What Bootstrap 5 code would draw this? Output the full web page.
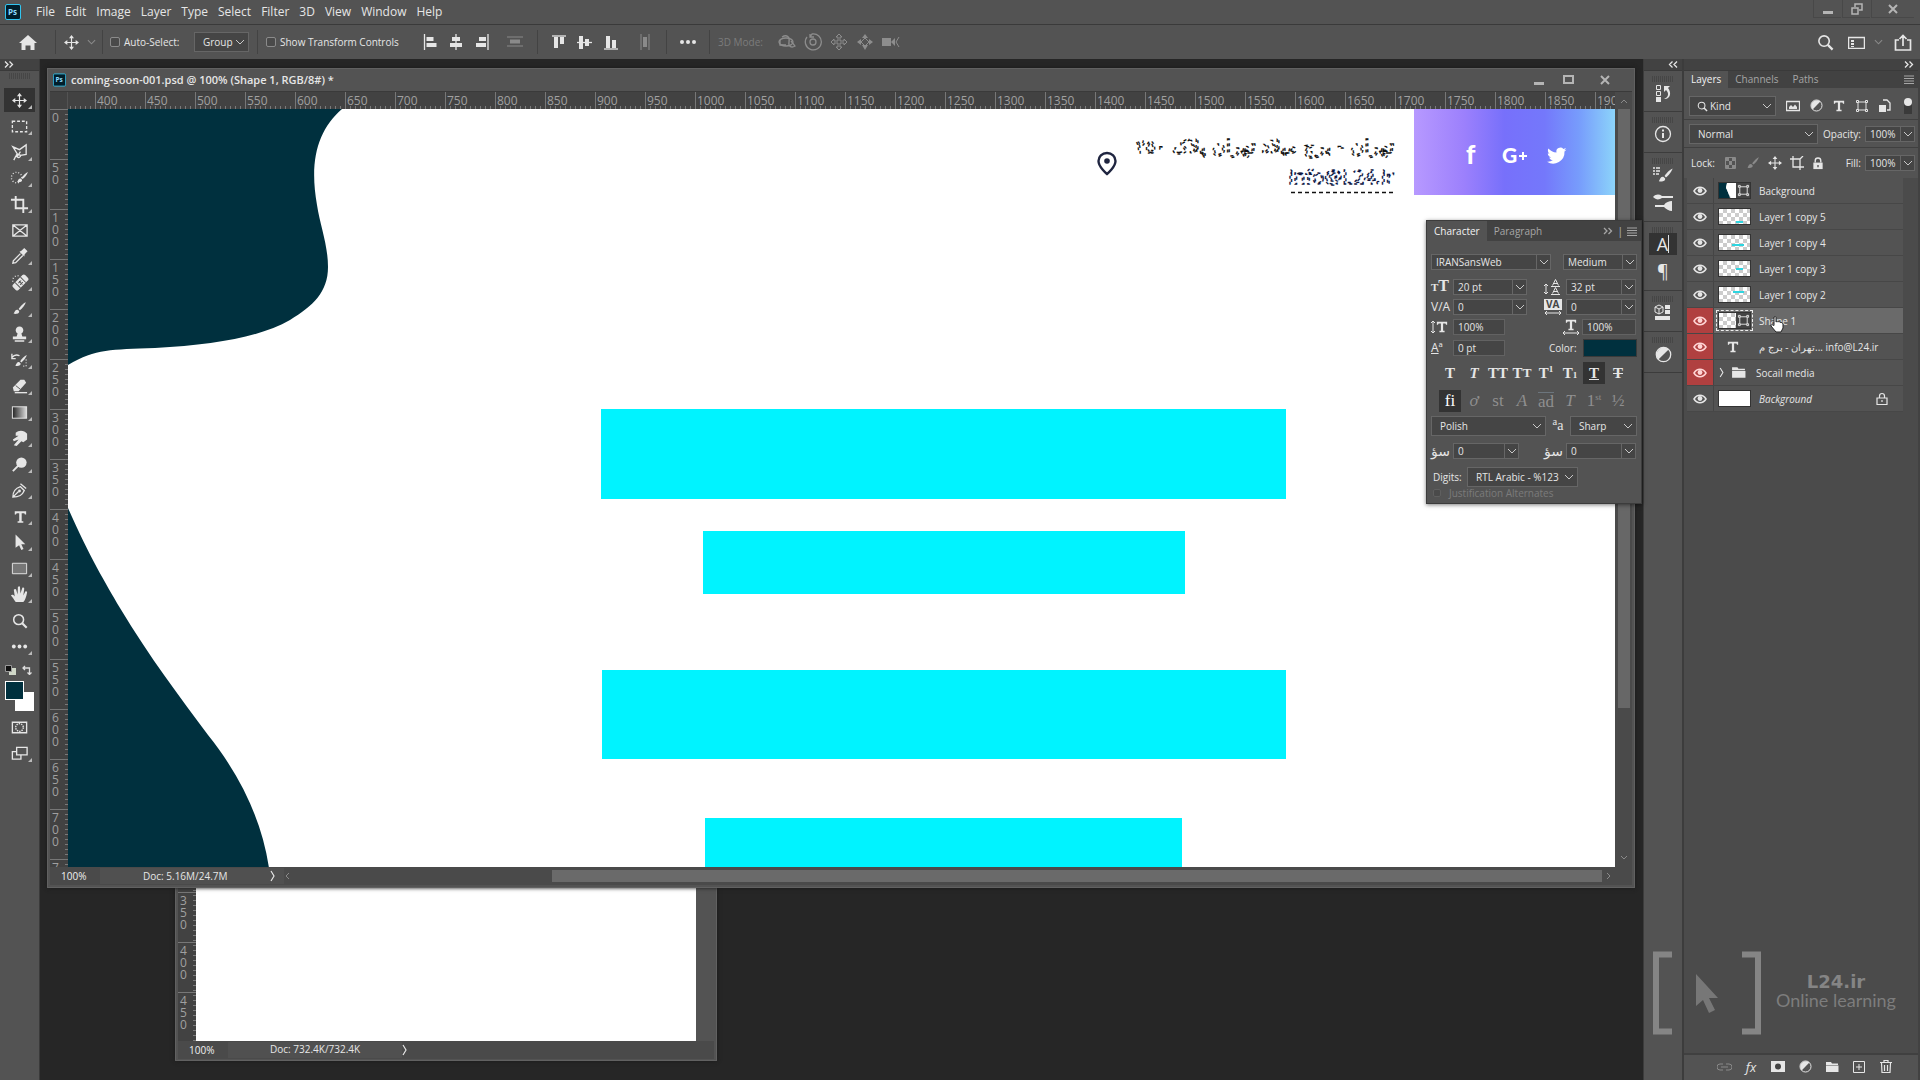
<!DOCTYPE html>
<html lang="en">
<head>
<meta charset="utf-8">
<meta name="viewport" content="width=device-width, initial-scale=1">
<title>coming-soon-001.psd</title>
<link href="https://cdn.jsdelivr.net/npm/bootstrap@5.3.0/dist/css/bootstrap.min.css" rel="stylesheet">
<style>
:root{--bar:#535353;--edge:#3a3a3a;--well:#454545;--deep:#424242;--ink:#e6e6e6;--dim:#a6a6a6;--navy:#00303e}
body{background:#262626;color:var(--ink);font:10px/14px "Open Sans","Noto Sans",sans-serif;overflow:hidden}
svg{display:block;flex:none}
button,a{color:inherit;text-decoration:none}
main,.minh{min-height:0}
.plain{background:none;border:0;padding:0;display:flex;align-items:center;justify-content:center;flex:none;color:inherit}
.menubar{height:25px;background:var(--bar);border-bottom:1px solid var(--edge);padding-left:5px;font-size:12px;line-height:16px}
.menubar nav{gap:10px;margin-left:15px}
.applogo{margin-top:4px}
.capbtns{color:#b5b5b5;height:18px;padding-right:6px;gap:1px}
.capbtns .plain{width:28px;border-left:1px solid #484848;border-bottom:1px solid #484848}
.capbtns .plain:last-child{width:43px}
.optbar{height:34px;background:var(--bar);padding:0 8px 0 17px}
.homebtn{width:22px}
.vline{width:1px;height:24px;background:#434343;flex:none}
.vline.l6{margin-left:6px;margin-right:7px}
.vline.l12{margin-left:14px;margin-right:13px}
.tick{appearance:none;width:10px;height:10px;border:1px solid #8b8b8b;border-radius:2px;background:#4a4a4a;margin:0;flex:none}
.tick.tiny{width:8px;height:8px;border-color:#5f5f5f}
.lab-auto{width:70px}
.lab-xf{width:138px}
.pick-group{width:55px}
.distv{margin-left:17px}
.disth{margin-left:22px}
.morebtn{width:42px}
.lab-3d{width:60px;color:#7c7c7c}
.icons3d{color:#8d8d8d}
.wsbtn{margin-left:14px}
.wscaret{margin:0 11px 0 9px}
.gap11{gap:11px}
.faint{color:#8a8a8a}
.pick{appearance:none;color:var(--ink);background:var(--well) url("data:image/svg+xml,%3Csvg xmlns='http://www.w3.org/2000/svg' width='14' height='8'%3E%3Cpath d='M3 2l4 4 4-4' fill='none' stroke='%23c8c8c8'/%3E%3C/svg%3E") no-repeat right 1px center;border:1px solid #666;border-radius:0;font-size:10px;line-height:12px;padding:0 14px 0 8px;height:20px;min-width:0}
.pick.combo{height:16px;padding-left:4px;background-image:url("data:image/svg+xml,%3Csvg xmlns='http://www.w3.org/2000/svg' width='14' height='16'%3E%3Cpath d='M.5 0v16' stroke='%23666'/%3E%3Cpath d='M4 6l4 4 4-4' fill='none' stroke='%23c8c8c8'/%3E%3C/svg%3E");background-position:right 0 center}
.field{background:var(--well);border:1px solid #626262;color:var(--ink);font-size:10px;line-height:12px;height:16px;width:52px;padding:0 4px;border-radius:0;min-width:0}
.toolcol{width:40px;background:var(--bar);border-right:1px solid var(--edge)}
.strip{height:12px;background:var(--deep);border-bottom:1px solid var(--edge)}
.grip{height:6px;width:22px;background:repeating-linear-gradient(90deg,#464646 0 1px,transparent 1px 2px)}
.toolcol .grip{margin:2px auto 9px}
.toolset{padding-left:4px}
.miniswap{padding:5px 0 6px 5px;gap:6px}
.tool{width:31px;height:24px;margin-bottom:2px;position:relative;border-radius:0}
.tool::after{content:"";position:absolute;right:3px;bottom:3px;border:2px solid transparent;border-right-color:#bbb;border-bottom-color:#bbb}
.tool.solo::after{display:none}
.tool.on,.chip.on{background:#333}
.swatches{position:relative;width:30px;height:31px;margin-left:4px}
.swatches span{position:absolute;width:19px;height:19px;border:1px solid #fff}
.swatches .bg{right:0;bottom:1px;background:#fff}
.swatches .fg{left:1px;top:0;background:var(--navy)}
.modeset{padding:3px 0 0 4px}
.deskarea{background:#262626;position:relative;min-width:0}
.docwin{position:absolute;background:var(--bar);border:1px solid #616161;padding:0 2px;box-shadow:0 0 4px #1a1a1a}
.docmain{left:7px;right:8px;top:9px;height:820px;padding-bottom:2px}
.docback{left:135px;top:600px;width:542px;height:402px}
.docback .body{height:381px}
.docback .paper{width:500px}
.docback .marks{padding-top:232px}
.doctitle{height:22px;padding-left:3px;gap:5px;font-size:11px;font-weight:600}
.ruler-x{height:18px;background:var(--deep);border-top:1px solid var(--edge);overflow:hidden;color:#a0a0a0;font-size:12px;line-height:17px;flex:none}
.rulercorner{width:18px;flex:none;border-right:1px solid #535353}
.ruler-x .marks,.ruler-y .marks{display:flex;flex:1;min-width:0;min-height:0;overflow:hidden}
.ruler-x .marks{padding-left:27px;background:repeating-linear-gradient(90deg,#7a7a7a 0 1px,transparent 1px 5px) 2px 100%/100% 3px no-repeat}
.ruler-x .marks span{width:50px;flex:none;border-left:1px solid #777;padding-left:1px}
.ruler-y{width:18px;flex:none;background:var(--deep);color:#a0a0a0;font-size:12px;line-height:12px;overflow:hidden}
.ruler-y .marks{flex-direction:column;background:repeating-linear-gradient(180deg,#7a7a7a 0 1px,transparent 1px 5px) 100% 0/3px 100% no-repeat}
.ruler-y .marks span{height:50px;width:18px;flex:none;border-top:1px solid #777;padding:2px 9px 0 2px;word-break:break-all}
.paper{background:#fff;overflow:hidden;min-width:0}
.vscroll{width:17px;background:#4a4a4a;flex:none}
.thumb-y{width:12px;height:79%;background:#676767}
.status{height:18px;background:#4a4a4a}
.status .info{background:#505050;height:16px;width:184px;padding-left:43px;padding-right:8px}
.docback .info{padding-left:42px;padding-right:0;width:174px}
.zoomval{width:50px;padding-left:11px;color:#f0f0f0}
.trackx{padding-right:4px}
.thumb-x{height:12px;width:80%;background:#6a6a6a}
.scrollend{margin-right:20px}
.charpanel{position:absolute;right:1px;top:161px;width:216px;background:var(--bar);border:1px solid #3c3c3c;box-shadow:0 1px 4px rgba(0,0,0,.5);padding-bottom:4px}
.tabs{background:var(--deep);color:var(--dim);font-weight:600}
.tabs .plain{height:100%;padding:0 7px}
.tabs .on{background:var(--bar);color:#f2f2f2}
.charpanel .tabs{height:20px}
.layerpanel .tabs{height:17px}
.layerpanel .tabs .plain{padding-bottom:2px}
.fontrow{padding:13px 4px 8px;gap:12px}
.pick-family{width:120px}
.rows{row-gap:4px}
.pair{display:grid;grid-template-columns:22px 74px 17px 22px 70px;align-items:center;padding-left:4px}
.pair label{white-space:nowrap}
.scalelab{width:22px}
.hscale{margin:0 2px 0 57px}
.field.end{width:54px}
.colorlab{margin-left:44px;width:34px}
.colorwell{width:54px;height:18px;background:var(--navy);border:1px solid #3a3a3a}
.chips{padding:5px 10px 0 12px;gap:2px}
.chips.otf{padding-top:6px;padding-bottom:4px;color:#8f8f8f}
.chip{width:22px;height:22px;font:bold 15px/20px "Liberation Serif",serif}
.chip.light{font-weight:400;font-size:17px}
.chip sub,.chip sup{font-size:9px;line-height:0}
.lab{font:bold 16px/15px "Liberation Serif",serif}
.lab small{font-size:11px}
.lab-k{font-size:12px;line-height:14px}
.lab-fa{font:14px/14px "DejaVu Sans",sans-serif}
.langrow{padding:0 4px}
.pick-lang{width:115px}
.lab-aa{width:24px;text-align:center;font:14px/14px "Liberation Serif",serif}
.kashida{margin:7px 0 8px}
.digitrow{padding-left:6px}
.digitrow label{width:34px}
.pick-digits{width:111px}
.justrow{padding-left:6px;gap:8px;color:#7b7b7b;line-height:12px}
.dock{width:41px;background:var(--bar);border-left:1px solid #3c3c3c;border-right:2px solid #3c3c3c}
.dockgrp{border-bottom:1px solid #3c3c3c;padding-top:5px;height:41px}
.dockgrp.tall{height:69px}
.dockgrp .plain{width:28px;height:22px;font-size:18px;line-height:20px}
.dockgrp .plain.mb{margin-bottom:5px}
.dockgrp .plain.on{background:#333}
.flip{transform:scaleX(-1)}
.layerpanel{width:236px;background:#4b4b4b;border-right:2px solid #424242}
.ctl{background:var(--bar);border-bottom:1px solid #404040;padding-left:5px}
.ctl-filter{height:32px;gap:10px;padding-top:4px}
.ctl-blend{height:28px;padding-top:1px}
.ctl-lock{height:30px;border:0}
.kindbox{width:87px}
.kindbox .pick{padding-left:20px}
.kindbox svg{position:absolute;left:8px;top:5px}
.pick-blend{width:129px}
.pick-pct{width:50px}
.lab-op{width:43px;margin-right:4px;text-align:right}
.lab-lock{width:35px;padding-left:2px}
.lab-fill{width:37px;margin-right:4px;text-align:right}
.layerrow{height:26px;background:var(--bar);border-bottom:1px solid #474747;margin-right:15px;margin-left:3px}
.eyecell{width:27px;height:25px;border-right:1px solid #454545}
.red .eyecell{background:#b04040;color:#ffd6d6}
.layerrow.sel{background:#6a6a6a}
.thumbbox{width:33px;height:17px;margin:0 8px 0 4px;border:1px solid #333;background:repeating-conic-gradient(#ccc 0 25%,#fff 0 50%) 0 0/8px 8px;flex:none}
.thumbbox.blank{background:#fff}
.typecell{width:45px;padding-right:7px}
.groupcell{width:42px;padding-left:5px;gap:6px}
.sel .thumbbox{outline:1px dashed #eee;outline-offset:1px}
.rowlock{margin-right:15px}
.handcursor{position:absolute;left:83px;top:8px}
.footbar{height:27px;background:var(--bar);border-top:2px solid #404040;padding:0 23px 2px 0;gap:9px}
.footbar .plain{width:18px;height:22px}
.fx{font-size:13px}
.watermark{position:absolute;right:24px;bottom:45px;gap:13px;color:#858585;pointer-events:none}
.wmtext{font:18px/19px "Lato",sans-serif;color:#7d7d7d;padding-bottom:5px}
.wmtext b{display:block;font:bold 18px/19px "DejaVu Sans",sans-serif;color:#858585}
</style>
<script src="https://cdn.jsdelivr.net/npm/bootstrap@5.3.0/dist/js/bootstrap.bundle.min.js"></script>
</head>
<body class="vh-100 d-flex flex-column">
<svg width="0" height="0" class="position-absolute" aria-hidden="true">
<defs>
<symbol id="ps" viewBox="0 0 16 16"><rect x=".5" y=".5" width="15" height="15" rx="1.5" fill="#001e2b" stroke="#31c5f0"/><text x="3" y="11" font-size="8" font-weight="700" fill="#8fdcff" font-family="Open Sans">Ps</text></symbol>
<symbol id="move" viewBox="0 0 18 18"><path d="M9 2v14M2 9h14" stroke="currentColor" stroke-width="1.4"/><path d="M9 0l3 4H6zM9 18l3-4H6zM0 9l4-3v6zM18 9l-4-3v6z" fill="currentColor"/></symbol>
<symbol id="chev" viewBox="0 0 10 8"><path d="M1 2l4 4 4-4" fill="none" stroke="currentColor" stroke-width="1.2"/></symbol>
<symbol id="right" viewBox="0 0 6 12"><path d="M1 1l3 5-3 5" fill="none" stroke="currentColor" stroke-width="1.2"/></symbol>
<symbol id="dbl" viewBox="0 0 10 7"><path d="M1 .5l3 3-3 3M5.5 .5l3 3-3 3" fill="none" stroke="currentColor" stroke-width="1.3"/></symbol>
<symbol id="burger" viewBox="0 0 10 9"><path d="M0 1h10M0 3.5h10M0 6h10M0 8.5h10" stroke="currentColor"/></symbol>
<symbol id="alignl" viewBox="0 0 14 16"><path d="M1 0v16" stroke="currentColor" stroke-width="1.3"/><path d="M3 3h7v4H3zM3 9h10v4H3z" fill="currentColor"/></symbol>
<symbol id="alignc" viewBox="0 0 14 16"><path d="M7 0v16" stroke="currentColor" stroke-width="1.3"/><path d="M3 3h8v4H3zM1 9h12v4H1z" fill="currentColor"/></symbol>
<symbol id="glass" viewBox="0 0 18 18"><circle cx="7.5" cy="7.5" r="5.5" fill="none" stroke="currentColor" stroke-width="1.7"/><path d="M11.5 11.5l5 5" stroke="currentColor" stroke-width="2.4"/></symbol>
<symbol id="brush" viewBox="0 0 18 18"><path d="M16.5 1.5C13 3 9 7.5 8 9.5l1.5 1.5c2.5-2 6-6 7-9.5z" fill="currentColor"/><path d="M7 10.5c-3-.5-3.5 2-5 4.5 3 1 7.5 0 6.5-3z" fill="currentColor"/></symbol>
<symbol id="eye" viewBox="0 0 14 10"><path d="M1 5c3-5 9-5 12 0-3 5-9 5-12 0z" fill="none" stroke="currentColor" stroke-width="1.5"/><circle cx="7" cy="4.5" r="2.4" fill="currentColor"/></symbol>
<symbol id="half" viewBox="0 0 16 16"><circle cx="8" cy="8" r="6.8" fill="none" stroke="currentColor" stroke-width="1.2"/><path d="M12.8 3.2A6.8 6.8 0 0 0 3.2 12.8z" fill="currentColor"/></symbol>
<symbol id="shape" viewBox="0 0 14 14"><path d="M3 3h8v8H3z" fill="none" stroke="currentColor"/><path d="M1.5 1.5h2v2h-2zM10.5 1.5h2v2h-2zM1.5 10.5h2v2h-2zM10.5 10.5h2v2h-2z" fill="#535353" stroke="currentColor"/></symbol>
<symbol id="tee" viewBox="0 0 14 14"><path d="M1 1h12v3.5h-1.3L11 3H8.3v8.5H10V13H4v-1.5h1.7V3H3L2.3 4.5H1z" fill="currentColor"/></symbol>
<symbol id="folder" viewBox="0 0 14 12"><path d="M1 1h5l1 1.5h6V4H1zM1 4.5h12.5V11H1z" fill="currentColor"/></symbol>
<symbol id="lock" viewBox="0 0 12 14"><path d="M3 6V4a3 3 0 0 1 6 0v2" fill="none" stroke="currentColor" stroke-width="1.5"/><path d="M1 6h10v7H1z" fill="currentColor"/><path d="M6 8.5v2.5" stroke="#535353" stroke-width="1.5"/></symbol>
<symbol id="cursor" viewBox="0 0 14 18"><path d="M2 0v15l4-3 2.5 5.5 2.5-1.2L8.5 11H13z" fill="currentColor"/></symbol>
<symbol id="pic" viewBox="0 0 14 12"><path d="M.5 1.5h13v9H.5z" fill="none" stroke="currentColor" stroke-width="1.3"/><path d="M3 9V7l2-2 2 2 2-2.5L11 7v2z" fill="currentColor"/></symbol>
</defs>
</svg>

<header class="menubar d-flex align-items-start flex-shrink-0">
  <svg class="applogo" width="16" height="16"><use href="#ps"/></svg>
  <nav class="d-flex pt-1" aria-label="Main menu"><a href="#">File</a><a href="#">Edit</a><a href="#">Image</a><a href="#">Layer</a><a href="#">Type</a><a href="#">Select</a><a href="#">Filter</a><a href="#">3D</a><a href="#">View</a><a href="#">Window</a><a href="#">Help</a></nav>
  <div class="capbtns d-flex ms-auto">
    <button class="plain" aria-label="Minimize"><svg width="12" height="12"><path d="M1 8h10v3H1z" fill="currentColor"/></svg></button>
    <button class="plain" aria-label="Restore"><svg width="12" height="12"><path d="M4 4V1h7v6H8M1 5h6v6H1z" fill="none" stroke="currentColor" stroke-width="1.5"/></svg></button>
    <button class="plain" aria-label="Close"><svg width="10" height="10"><path d="M1 1l8 8M9 1L1 9" stroke="currentColor" stroke-width="2"/></svg></button>
  </div>
</header>

<div class="optbar d-flex align-items-center flex-shrink-0">
  <button class="plain homebtn" aria-label="Home"><svg width="18" height="15"><path d="M9 0l9 8h-2.5v7h-4v-4.5h-5V15h-4V8H0z" fill="currentColor"/></svg></button>
  <span class="vline ms-3 me-2"></span>
  <svg width="15" height="15"><use href="#move"/></svg>
  <svg class="faint ms-2" width="9" height="8"><use href="#chev"/></svg>
  <span class="vline l6"></span>
  <input class="tick" type="checkbox" id="auto"><label for="auto" class="lab-auto ms-1">Auto-Select:</label>
  <select class="pick pick-group" aria-label="Auto-select target"><option>Group</option></select>
  <span class="vline mx-2"></span>
  <input class="tick" type="checkbox" id="xf"><label for="xf" class="lab-xf ms-1">Show Transform Controls</label>
  <div class="d-flex align-items-center gap-2 ps-1">
    <svg width="17" height="16"><use href="#alignl"/></svg>
    <svg width="18" height="16"><use href="#alignc"/></svg>
    <svg width="17" height="16"><g transform="matrix(-1 0 0 1 16 0)"><use href="#alignl" width="14" height="16"/></g></svg>
  </div>
  <svg class="faint distv" width="16" height="12"><path d="M0 1h16M0 10h16" stroke="currentColor"/><path d="M3 3.5h10v4H3z" fill="currentColor"/></svg>
  <span class="vline l12"></span>
  <div class="d-flex align-items-center gap11">
    <svg width="15" height="15"><path d="M1 1h14" stroke="currentColor" stroke-width="1.3"/><path d="M3 2h4v11H3zM9 2h4v7H9z" fill="currentColor"/></svg>
    <svg width="15" height="15"><path d="M0 7.5h15" stroke="currentColor" stroke-width="1.3"/><path d="M2 1h4v13H2zM8 4h4v7H8z" fill="currentColor"/></svg>
    <svg width="15" height="15"><path d="M1 14h14" stroke="currentColor" stroke-width="1.3"/><path d="M3 1h4v12H3zM9 5h4v8H9z" fill="currentColor"/></svg>
  </div>
  <svg class="faint disth" width="10" height="16"><path d="M1 0v16M9 0v16" stroke="currentColor"/><path d="M3 3h4v10H3z" fill="currentColor"/></svg>
  <span class="vline ms-3"></span>
  <button class="plain morebtn" aria-label="More options"><svg width="16" height="4"><g fill="currentColor"><circle cx="2" cy="2" r="2"/><circle cx="8" cy="2" r="2"/><circle cx="14" cy="2" r="2"/></g></svg></button>
  <span class="vline me-2"></span>
  <span class="lab-3d">3D Mode:</span>
  <div class="icons3d d-flex align-items-center gap-2">
    <svg width="18" height="16" fill="none" stroke="currentColor" stroke-width="1.3"><ellipse cx="8" cy="8" rx="7" ry="4"/><path d="M4 3c5-3 8 0 7 5s3 6 6 4l-4-5M2 6v5h6"/></svg>
    <svg width="18" height="18" fill="none" stroke="currentColor" stroke-width="1.3"><circle cx="9" cy="9" r="3"/><path d="M3 4a8 8 0 1 0 5-3L6 4M6 1v3h4"/></svg>
    <svg width="18" height="18" fill="none" stroke="currentColor"><path d="M9 1l3 3h-2v4h4V6l3 3-3 3v-2h-4v4h2l-3 3-3-3h2v-4H4v2L1 9l3-3v2h4V4H6z"/></svg>
    <svg width="18" height="18" fill="currentColor"><path d="M9 1l3 4H6zM1 9l4-3v6zM17 9l-4-3v6z"/><path d="M6 12h6l-3 5z"/><path d="M9 5l4 4-4 4-4-4z" fill="none" stroke="currentColor"/></svg>
    <svg width="18" height="12" fill="currentColor"><path d="M0 2h9v8H0zM9 6l4-4v8z"/><path d="M17 1l-3 5 3 5" fill="none" stroke="currentColor"/></svg>
  </div>
  <div class="d-flex align-items-center ms-auto">
    <button class="plain" aria-label="Search"><svg width="17" height="17"><use href="#glass"/></svg></button>
    <button class="plain wsbtn" aria-label="Workspace"><svg width="17" height="13"><path d="M.5 1.5h16v11H.5z" fill="none" stroke="currentColor" stroke-width="1.5"/><path d="M3 4h3v2H3zM3 7h3v2H3zM3 10h3v1H3z" fill="currentColor"/></svg></button>
    <svg class="faint wscaret" width="9" height="8"><use href="#chev"/></svg>
    <button class="plain" aria-label="Share"><svg width="18" height="17" fill="none" stroke="currentColor" stroke-width="1.7"><path d="M5 6H1.5v10h15V6H13M9 12V2M5.5 5L9 1.5 12.5 5"/></svg></button>
  </div>
</div>

<main class="d-flex flex-grow-1">
  <aside class="toolcol d-flex flex-column flex-shrink-0" aria-label="Tools">
    <div class="strip d-flex align-items-center ps-1"><svg width="10" height="7"><use href="#dbl"/></svg></div>
    <div class="grip"></div>
    <div id="tools" class="toolset d-flex flex-column"></div>
    <div class="miniswap d-flex">
      <svg width="11" height="10"><path d="M4 3h7v7H4z" fill="#d0d8c8"/><path d="M.5 .5h6v6h-6z" fill="#111" stroke="#999"/></svg>
      <svg width="10" height="10" fill="none" stroke="#ddd" stroke-width="1.3"><path d="M1 3h6.5v6M3 1L1 3l2 2M5.5 7.5l2 2 2-2"/></svg>
    </div>
    <div class="swatches"><span class="bg"></span><span class="fg"></span></div>
    <div id="modes" class="modeset d-flex flex-column"></div>
  </aside>

  <section class="deskarea flex-grow-1">
    <div class="docwin docback">
      <div class="body d-flex">
        <div class="ruler-y d-flex"><div class="marks" data-from="350" data-to="450"></div></div>
        <div class="paper"></div>
      </div>
      <div class="status d-flex align-items-center"><span class="zoomval">100%</span><span class="info">Doc: 732.4K/732.4K</span><svg width="6" height="12"><use href="#right"/></svg></div>
    </div>

    <div class="docwin docmain d-flex flex-column">
      <div class="doctitle d-flex align-items-center flex-shrink-0"><svg width="13" height="14"><use href="#ps"/></svg><span>coming-soon-001.psd @ 100% (Shape 1, RGB/8#) *</span>
        <div class="capbtns d-flex ms-auto align-items-center">
          <button class="plain border-0" aria-label="Minimize document"><svg width="10" height="10"><path d="M0 7h10v3H0z" fill="currentColor"/></svg></button>
          <button class="plain border-0" aria-label="Maximize document"><svg width="11" height="10"><path d="M1 1h9v7H1z" fill="none" stroke="currentColor" stroke-width="2"/></svg></button>
          <button class="plain border-0" aria-label="Close document"><svg width="10" height="10"><path d="M1 1l8 8M9 1L1 9" stroke="currentColor" stroke-width="2"/></svg></button>
        </div></div>
      <div class="ruler-x d-flex"><span class="rulercorner"></span><div class="marks" data-from="400" data-to="1900"></div><span class="vscroll d-flex align-items-center justify-content-center"><svg class="faint" width="8" height="6"><path d="M1 5l3-3 3 3" fill="none" stroke="currentColor"/></svg></span></div>
      <div class="minh d-flex flex-grow-1">
        <div class="ruler-y d-flex"><div class="marks" data-from="0" data-to="750"></div></div>
        <div class="paper flex-grow-1">
          <svg width="100%" height="100%" role="img" aria-label="Artwork">
            <defs><linearGradient id="sky"><stop offset="0" stop-color="#b799ff"/><stop offset=".25" stop-color="#9c80fc"/><stop offset=".45" stop-color="#7770fb"/><stop offset=".65" stop-color="#7478fb"/><stop offset=".82" stop-color="#779cfc"/><stop offset="1" stop-color="#8cd4fa"/></linearGradient></defs>
            <g transform="translate(-68 -109)">
              <path fill="#00303e" d="M68 109H342C318 130 309 160 317 205C320 225 328 245 328 267C328 292 313 306 290 320C260 337 215 345 155 348C110 350 97 348 68 365Z"/>
              <path fill="#00303e" d="M68 508C90 558 105 582 120 608C150 658 180 697 208 735C240 775 262 820 269 868H68Z"/>
              <g fill="#00f3ff"><path d="M601 409h685v90H601zM703 531h482v63H703zM602 670h684v89H602zM705 818h477v60H705z"/></g>
              <path fill="url(#sky)" d="M1414 109h201v86h-201z"/>
              <g fill="#fff" font-family="Lato" font-weight="900"><text x="1466" y="164" font-size="26">f</text><text x="1502" y="163" font-size="21">G</text></g>
              <path d="M1523 152v8M1519 156h8" stroke="#fff" stroke-width="2"/>
              <path transform="translate(1547 147)" fill="#fff" d="M19.5 2.5c-.7.4-1.5.6-2.3.7.8-.5 1.4-1.3 1.7-2.2-.8.5-1.6.8-2.5 1A4 4 0 0 0 9.500 5.600C6.200 5.400 3.300 3.900 1.400 1.500c-1 1.800-.5 4.100 1.200 5.300-.6 0-1.200-.2-1.800-.5 0 2 1.300 3.600 3.200 4-.6.200-1.200.2-1.800.1.5 1.600 2 2.700 3.700 2.700A8 8 0 0 1 0 14.800 11.400 11.400 0 0 0 17.500 4.600c.8-.6 1.500-1.300 2-2.100z"/>
              <path d="M1107 153c-5 0-8.500 3.700-8.500 8 0 6 8.500 13 8.500 13s8.500-7 8.500-13c0-4.300-3.500-8-8.500-8z" fill="none" stroke="#1f2540" stroke-width="2.4"/><circle cx="1107" cy="161" r="2.8" fill="#1f2540"/>
              <g fill="#fff" stroke="#111" stroke-width="1.3" stroke-dasharray="3 3">
                <text x="1394" y="153" direction="rtl" font-family="DejaVu Sans" font-size="19">تهران - برج میلاد تهران پلاک ۲۵۰</text>
                <text x="1394" y="184" text-anchor="end" font-family="Open Sans" font-size="20" fill="#eef2ff" stroke="#0c1642">info@L24.ir</text>
                <path d="M1291 192.500h103" stroke-dasharray="4 3"/>
              </g>
            </g>
          </svg>
        </div>
        <div class="vscroll d-flex flex-column align-items-center"><div class="thumb-y"></div><svg class="faint mt-auto" width="8" height="14"><path d="M1 3l3 3 3-3" fill="none" stroke="currentColor"/></svg></div>
      </div>
      <div class="status d-flex align-items-center flex-shrink-0"><span class="zoomval">100%</span><span class="info d-flex align-items-center justify-content-between">Doc: 5.16M/24.7M<svg width="6" height="12"><use href="#right"/></svg></span>
        <svg class="faint" width="6" height="10"><path d="M5 2L2 5l3 3" fill="none" stroke="currentColor"/></svg>
        <div class="trackx flex-grow-1 d-flex justify-content-end"><div class="thumb-x"></div></div><svg class="faint scrollend" width="6" height="10"><path d="M1 2l3 3-3 3" fill="none" stroke="currentColor"/></svg></div>
    </div>

    <div class="charpanel">
      <div class="tabs d-flex align-items-center"><button class="plain on">Character</button><button class="plain">Paragraph</button><svg class="ms-auto" width="10" height="8"><use href="#dbl"/></svg><span class="mx-1">|</span><svg width="10" height="9" class="me-1"><use href="#burger"/></svg></div>
      <div class="fontrow d-flex"><select class="pick combo pick-family" aria-label="Font family"><option>IRANSansWeb</option></select><select class="pick combo flex-grow-1" aria-label="Font style"><option>Medium</option></select></div>
      <div class="rows d-grid">
        <div class="pair"><label class="lab" for="fs"><small>T</small>T</label><select id="fs" class="pick combo"><option>20 pt</option></select><i></i><label for="ld"><svg width="18" height="16"><path d="M2 5v10M0 7l2-2 2 2M0 13l2 2 2-2M7 7.5h9M7 15.5h9" stroke="currentColor" fill="none"/><path d="M8.500 6.500l3-6 3 6M9.500 4.500h4M8.500 14.500l3-6 3 6M9.500 12.500h4" stroke="currentColor" fill="none"/></svg></label><select id="ld" class="pick combo"><option>32 pt</option></select></div>
        <div class="pair"><label class="lab-k" for="kn">V/A</label><select id="kn" class="pick combo"><option>0</option></select><i></i><label for="tr"><svg width="18" height="16"><path d="M0 0h18v11H0z" fill="#e6e6e6"/><text x="2" y="9" font-size="10" font-weight="700" fill="#444">VA</text><path d="M1 14h16M3 12l-2 2 2 2M15 12l2 2-2 2" stroke="currentColor" fill="none"/></svg></label><select id="tr" class="pick combo"><option>0</option></select></div>
        <div class="d-flex align-items-center ps-1"><label for="vs" class="scalelab"><svg width="18" height="14"><path d="M2 1v12M0 3l2-2 2 2M0 11l2 2 2-2" stroke="currentColor" fill="none"/><use href="#tee" x="5" width="12" height="14"/></svg></label><input id="vs" class="field" value="100%"><label for="hs" class="hscale"><svg width="18" height="16"><use href="#tee" x="3" width="12" height="12"/><path d="M1 14h16M3 12l-2 2 2 2M15 12l2 2-2 2" stroke="currentColor" fill="none"/></svg></label><input id="hs" class="field end" value="100%"></div>
        <div class="d-flex align-items-center ps-1"><label for="bs" class="scalelab lab-k"><u>A</u>ª</label><input id="bs" class="field" value="0 pt"><label for="tc" class="colorlab">Color:</label><button id="tc" class="plain colorwell"></button></div>
      </div>
      <div class="chips d-flex"><button class="plain chip">T</button><button class="plain chip fst-italic">T</button><button class="plain chip">TT</button><button class="plain chip">T<small>T</small></button><button class="plain chip">T<sup>1</sup></button><button class="plain chip">T<sub>1</sub></button><button class="plain chip on text-decoration-underline">T</button><button class="plain chip text-decoration-line-through">T</button></div>
      <div class="chips otf d-flex"><button class="plain chip on light text-white">fi</button><button class="plain chip light fst-italic">ơ</button><button class="plain chip light">st</button><button class="plain chip light fst-italic">A</button><button class="plain chip light"><span class="border-top border-secondary lh-1">ad</span></button><button class="plain chip light fst-italic">T</button><button class="plain chip light">1<sup>st</sup></button><button class="plain chip light">½</button></div>
      <div class="langrow d-flex align-items-center"><select class="pick pick-lang" aria-label="Language"><option>Polish</option></select><label for="aa" class="lab-aa"><sup>a</sup>a</label><select id="aa" class="pick flex-grow-1"><option>Sharp</option></select></div>
      <div class="pair kashida"><label for="k1" lang="fa" class="lab-fa">سؤ</label><select id="k1" class="pick combo me-2"><option>0</option></select><i></i><label for="k2" lang="fa" class="lab-fa">سؤ</label><select id="k2" class="pick combo"><option>0</option></select></div>
      <div class="digitrow d-flex align-items-center"><label for="dg">Digits:</label><select id="dg" class="pick pick-digits"><option>RTL Arabic - %123</option></select></div>
      <div class="justrow d-flex align-items-center"><input type="checkbox" class="tick tiny" id="ja" disabled><label for="ja">Justification Alternates</label></div>
    </div>
  </section>

  <aside class="dock d-flex flex-column flex-shrink-0" aria-label="Panel dock">
    <div class="strip d-flex align-items-center justify-content-end pe-1"><svg class="flip" width="10" height="7"><use href="#dbl"/></svg></div>
    <div class="dockgrp d-flex flex-column align-items-center"><i class="grip"></i><button class="plain" aria-label="History"><svg width="16" height="18"><g fill="none" stroke="currentColor"><path d="M1.5 1.5h4v4h-4zM1.5 7.5h4v4h-4z"/></g><path d="M1 13h5v5H1z" fill="currentColor"/><path d="M9 15c5-2 5-6 2-9l-2 2V2h6l-2 2c4 5 2 11-4 11z" fill="currentColor"/></svg></button></div>
    <div class="dockgrp d-flex flex-column align-items-center"><i class="grip"></i><button class="plain" aria-label="Info"><svg width="18" height="18"><circle cx="9" cy="9" r="7.5" fill="none" stroke="currentColor" stroke-width="1.3"/><path d="M9 8v5M9 4.5v2" stroke="currentColor" stroke-width="2"/></svg></button></div>
    <div class="dockgrp tall d-flex flex-column align-items-center"><i class="grip"></i><button class="plain mb" aria-label="Brush settings"><svg width="20" height="18"><path d="M0 2h2M3 2h4M0 5h2M3 5h4M0 8h2M3 8h3" stroke="currentColor" stroke-width="1.5"/><use href="#brush" x="4" y="1" width="17" height="17"/></svg></button><button class="plain" aria-label="Brushes"><svg width="20" height="18"><path d="M0 4c3-3 6-3 9-1h11v2H9c-3 2-6 2-9-1zM2 12h9c2-3 5-4 8-4v10c-3 0-6-2-8-4H2z" fill="currentColor"/></svg></button></div>
    <div class="dockgrp tall d-flex flex-column align-items-center"><i class="grip"></i><button class="plain on mb" aria-label="Character"><span class="border-end lh-1">A</span></button><button class="plain" aria-label="Paragraph">¶</button></div>
    <div class="dockgrp d-flex flex-column align-items-center"><i class="grip"></i><button class="plain" aria-label="Libraries"><svg width="18" height="18"><path d="M5 1l4 2v5l-4 2-4-2V3zM1 3l4 2 4-2M5 5v5" fill="none" stroke="currentColor"/><path d="M11 1h5v4h-5zM11 6h5v4h-5zM1 12h15v4H1z" fill="currentColor"/></svg></button></div>
    <div class="dockgrp d-flex flex-column align-items-center"><i class="grip"></i><button class="plain" aria-label="Adjustments"><svg width="17" height="17"><use href="#half"/></svg></button></div>
  </aside>

  <aside class="layerpanel d-flex flex-column flex-shrink-0" aria-label="Layers">
    <div class="strip d-flex align-items-center justify-content-end pe-1"><svg width="10" height="7"><use href="#dbl"/></svg></div>
    <div class="tabs d-flex align-items-center"><button class="plain on">Layers</button><button class="plain">Channels</button><button class="plain">Paths</button><svg class="ms-auto me-1" width="10" height="9"><use href="#burger"/></svg></div>
    <div class="ctl ctl-filter d-flex align-items-center">
      <div class="kindbox d-flex position-relative"><select class="pick w-100" aria-label="Filter type"><option>Kind</option></select><svg width="11" height="11"><use href="#glass"/></svg></div>
      <svg width="14" height="12"><use href="#pic"/></svg><svg width="13" height="13"><use href="#half"/></svg><svg width="12" height="12"><use href="#tee"/></svg><svg width="14" height="14"><use href="#shape"/></svg><svg width="12" height="14"><path d="M4 1h4l3 3v7H8" fill="none" stroke="currentColor" stroke-width="1.3"/><path d="M0 6h7v7H0z" fill="currentColor"/></svg><svg width="12" height="18"><path d="M3 6h8v11H3z" fill="#3a3a3a"/><circle cx="7" cy="5" r="4" fill="currentColor"/></svg>
    </div>
    <div class="ctl ctl-blend d-flex align-items-center"><select class="pick pick-blend" aria-label="Blend mode"><option>Normal</option></select><label for="op" class="lab-op">Opacity:</label><select id="op" class="pick combo pick-pct"><option>100%</option></select></div>
    <div class="ctl ctl-lock d-flex align-items-center"><span class="lab-lock">Lock:</span>
      <div class="d-flex align-items-center gap-2"><svg class="faint" width="14" height="12"><path d="M1.5 .5h10v11h-10z" fill="none" stroke="currentColor"/><path d="M2 1h3v3H2zM8 1h3v3H8zM5 4h3v4H5zM2 8h3v3H2zM8 8h3v3H8z" fill="currentColor"/></svg><svg class="faint" width="14" height="14"><use href="#brush"/></svg><svg width="14" height="14"><use href="#move"/></svg><svg width="14" height="14"><path d="M3 0v11h11M0 3h10v11M10 3l3-3" fill="none" stroke="currentColor" stroke-width="1.3"/></svg><svg width="12" height="13"><use href="#lock"/></svg></div>
      <label for="fl" class="lab-fill">Fill:</label><select id="fl" class="pick combo pick-pct"><option>100%</option></select></div>
    <div id="layers"></div>
    <div class="footbar d-flex align-items-center justify-content-end mt-auto">
      <button class="plain faint" aria-label="Link layers"><svg width="15" height="8"><path d="M6 1H3a3 3 0 0 0 0 6h3M9 1h3a3 3 0 0 1 0 6H9M4 4h7" fill="none" stroke="currentColor"/></svg></button>
      <button class="plain fst-italic fx" aria-label="Layer style">fx</button>
      <button class="plain" aria-label="Add mask"><svg width="14" height="11"><path d="M0 0h14v11H0z" fill="currentColor"/><circle cx="7" cy="5.5" r="3" fill="#444"/></svg></button>
      <button class="plain" aria-label="Adjustment layer"><svg width="13" height="13"><use href="#half"/></svg></button>
      <button class="plain" aria-label="New group"><svg width="14" height="12"><use href="#folder"/></svg></button>
      <button class="plain" aria-label="New layer"><svg width="12" height="12"><path d="M.5 .5h11v11H.5zM6 3v6M3 6h6" fill="none" stroke="currentColor"/></svg></button>
      <button class="plain" aria-label="Delete layer"><svg width="12" height="13"><path d="M0 2.5h12M4 2V.5h4V2M1.5 3l.5 9.5h8l.5-9.5M4.5 5v6M7.5 5v6" fill="none" stroke="currentColor" stroke-width="1.2"/></svg></button>
    </div>
  </aside>
</main>

<div class="watermark d-flex align-items-center">
  <svg width="112" height="84"><path d="M21 3.5H5v77h16M91 3.5h16v77H91" fill="none" stroke="currentColor" stroke-width="6"/><path d="M45 23v32l7-6 6 13 6-3-6-12h9z" fill="#777"/></svg>
  <div class="wmtext text-center"><b>L24.ir</b>Online learning</div>
</div>

<script>
// Ruler labels: one 50px cell per mark
document.querySelectorAll('.marks').forEach(function (el) {
  for (var n = +el.dataset.from; n <= +el.dataset.to; n += 50) {
    var s = document.createElement('span');
    s.textContent = n;
    el.appendChild(s);
  }
});

var L = 'fill="none" stroke="currentColor" stroke-width="1.4"', F = 'fill="currentColor"';
var tools = [
  ['Move', '<use href="#move" x="2" y="2" width="16" height="16"/>'],
  ['Marquee', '<path d="M2.5 4.5h15v11h-15z" stroke-dasharray="3 2" ' + L + '/>'],
  ['Lasso', '<path d="M8 12L3 4l7 3 7-5v10l-6 1M11 9l-4 6M7 12a2 2 0 1 0 4 2c0-2-3-3-5 0l-2 4" ' + L + '/>'],
  ['Quick select', '<circle cx="7" cy="9" r="5.5" stroke-dasharray="1 2" ' + L + '/><use href="#brush" x="6" y="2" width="14" height="14"/>'],
  ['Crop', '<path d="M6 1v13h13M1 5h13v14" fill="none" stroke="currentColor" stroke-width="2"/>'],
  ['Frame', '<path d="M3 4h15v12H3zM3 4l15 12M18 4L3 16" ' + L + '/>'],
  ['Eyedropper', '<path d="M11 7L3.5 14.5 3 17l3-.5L13.5 9" ' + L + '/><path d="M10 5l2-1 3-3 3.5 3.5-3 3L15 10z" ' + F + '/>'],
  ['Healing', '<g transform="rotate(-45 11 10)"><rect x="2" y="6" width="18" height="8" rx="2" ' + F + '/><path d="M7 6v8M15 6v8" stroke="#535353"/><path d="M9 9h4M9 11.5h4M11 8v5" stroke="#535353"/></g><path d="M3 9a5 5 0 0 1 6-6" stroke-dasharray="1 2" ' + L + '/>'],
  ['Brush', '<use href="#brush" x="2" y="2" width="16" height="16"/>'],
  ['Stamp', '<path d="M8 9a4 4 0 1 1 4 0l1 3h4v3H3v-3h4zM5 16h10v1.5H5z" ' + F + '/>'],
  ['History brush', '<use href="#brush" x="4" y="3" width="15" height="15"/><path d="M2 7c3-4 6-3 8-2M2 3v5h4" ' + L + '/><path d="M17 9v7h-5" stroke-dasharray="1 2" ' + L + '/>'],
  ['Eraser', '<path d="M11 3h4l2 3-8 9H4l-1-4z" ' + F + '/><path d="M6 9l5 4" stroke="#535353"/><path d="M5 16.5h13" ' + L + '/>'],
  ['Gradient', '<defs><linearGradient id="gr"><stop stop-color="#222"/><stop offset="1" stop-color="#ddd"/></linearGradient></defs><rect x="2.5" y="4" width="15" height="12" fill="url(#gr)" stroke="currentColor"/>'],
  ['Smudge', '<path d="M6 4c3-3 9-3 12 1v6l-4 3-2-1-5 5-3-1 5-6-5 2-1-2 6-4-3 0z" ' + F + '/>'],
  ['Dodge', '<circle cx="12" cy="8" r="5.5" ' + F + '/><path d="M9 11l-6 6" stroke="currentColor" stroke-width="2"/>'],
  ['Pen', '<path d="M3 17c0-6 2-9 8-11l4 4c-2 5-5 7-12 7zM3 17l6-6M11 3l6 5" ' + L + '/><circle cx="10" cy="10.5" r="1.5" ' + F + '/>'],
  ['Type', '<use href="#tee" x="4" y="3" width="14" height="15"/>'],
  ['Path select', '<use href="#cursor" x="4" y="1" width="13" height="18"/>'],
  ['Rectangle', '<path d="M2.5 4.5h15v11h-15z" fill="#777" stroke="currentColor"/>'],
  ['Hand', '<path d="M6 18c-2-3-3-5-5-7 1-1 2-1 4 1L4 5c1-1 2-1 2.5 0l1.5 5 .3-8c1-1 2-1 2.2 0l.5 7L13 3c1-1 2 0 2 1l-1 7 2-4c1-1 2 0 2 1-1 5-2 8-4 10z" ' + F + '/>'],
  ['Zoom', '<use href="#glass" x="2" y="2" width="17" height="17"/>'],
  ['More', '<g ' + F + '><circle cx="4" cy="10" r="2"/><circle cx="10" cy="10" r="2"/><circle cx="16" cy="10" r="2"/></g>']
];
var modes = [
  ['Quick mask', '<path d="M2.5 4.5h15v11h-15z" ' + L + '/><circle cx="10" cy="10" r="4" stroke-dasharray="1.5 1" ' + L + '/>'],
  ['Screen mode', '<path d="M7 3.5h11v8H7zM7 8H2.5v8h9v-4" ' + L + '/>']
];
function button(t) {
  return '<button class="plain tool' + (t[0] === 'Move' ? ' on' : '') + (/Frame|Zoom|Quick mask/.test(t[0]) ? ' solo' : '') + '" aria-label="' + t[0] + '"><svg width="19" height="19" viewBox="0 0 20 20">' + t[1] + '</svg></button>';
}
document.getElementById('tools').innerHTML = tools.map(button).join('');
document.getElementById('modes').innerHTML = modes.map(button).join('');

var badge = '<rect x="17" width="14" height="15" fill="#444"/><use href="#shape" x="18" y="1" width="13" height="13"/>';
function thumb(inner) { return '<span class="thumbbox"><svg width="31" height="15">' + inner + '</svg></span>'; }
function bar(x, y, w) { return '<path d="M' + x + ' ' + y + 'h' + w + '" stroke="#2fd5e0" stroke-width="2"/>'; }
var layers = [
  ['', thumb('<path d="M0 0h8l-1 4 4 11H0z" fill="#00303e"/><path d="M8 0h9v15h-5L7 5z" fill="#fff"/>' + badge), 'Background'],
  ['', thumb(bar(17, 13, 7)), 'Layer 1 copy 5'],
  ['', thumb(bar(13, 10, 12)), 'Layer 1 copy 4'],
  ['', thumb(bar(17, 8, 7)), 'Layer 1 copy 3'],
  ['', thumb(bar(14, 5, 11)), 'Layer 1 copy 2'],
  ['red sel', thumb(badge), 'Shape 1'],
  ['red', '<span class="typecell d-flex justify-content-center"><svg width="12" height="12"><use href="#tee"/></svg></span>', '<bdi>تهران - برج م</bdi>... info@L24.ir'],
  ['red', '<span class="groupcell d-flex align-items-center"><svg width="6" height="11"><use href="#right"/></svg><svg width="15" height="13"><use href="#folder"/></svg></span>', 'Socail media'],
  ['', '<span class="thumbbox blank"></span>', '<i>Background</i>']
];
document.getElementById('layers').innerHTML = layers.map(function (l, i) {
  return '<div class="layerrow position-relative d-flex align-items-center ' + l[0] + '"><button class="plain eyecell" aria-label="Toggle visibility"><svg width="14" height="10"><use href="#eye"/></svg></button>' + l[1] + '<span>' + l[2] + '</span>' +
    (i === 5 ? '<svg class="handcursor" width="16" height="17"><path d="M4 1c2-1 2 0 2 1v4c1-1 2 0 2 0 1-1 2 0 2.3.5C11 6 13 7 13 8v4l-2 4H6L1 10c-.5-1 1-2 3-.5z" fill="#fff" stroke="#222"/></svg>' : '') +
    (i === 8 ? '<svg class="rowlock ms-auto" width="12" height="13"><path d="M3.5 6V4a2.5 2.5 0 0 1 5 0v2M1 6h10v6.5H1zM6 8v2" fill="none" stroke="currentColor" stroke-width="1.2"/></svg>' : '') + '</div>';
}).join('');
</script>
</body>
</html>
